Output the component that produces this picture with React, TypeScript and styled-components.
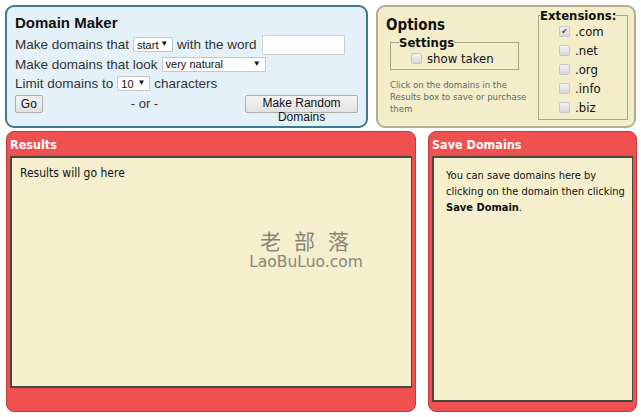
import styled, { createGlobalStyle } from "styled-components";

const GlobalStyle = createGlobalStyle`
  html, body {
    margin: 0;
    padding: 0;
    background: #ffffff;
  }
`;

const narrow = `"DejaVu Sans Condensed", "DejaVu Sans", Tahoma, sans-serif`;

// Página inteira
const Page = styled.div`
  padding: 5px;
  width: 631px;
  display: flex;
  flex-direction: column;
  gap: 4px;
`;

const TopRow = styled.div`
  display: grid;
  grid-template-columns: 363px 260px;
  gap: 8px;
  height: 122px;
`;

const BottomRow = styled.div`
  display: grid;
  grid-template-columns: 410px 209px;
  gap: 12px;
  height: 281px;
  padding-left: 1px;
`;

// Painel "Domain Maker"
const MakerPanel = styled.div`
  box-sizing: border-box;
  background: #e4f1f8;
  border: 2px solid #3d7b8c;
  border-radius: 9px;
  padding: 5px 8px 0 8px;
  font-family: "Liberation Sans", Arial, sans-serif;
  color: #333;
`;

const MakerTitle = styled.div`
  font-weight: bold;
  font-size: 15px;
  color: #111;
  height: 21px;
  line-height: 21px;
  margin-bottom: 2px;
`;

const Line = styled.div`
  display: flex;
  align-items: center;
  gap: 4px;
  font-size: 13.5px;
  height: 19.5px;
  white-space: nowrap;
`;

const FakeSelect = styled.span<{ $w: number }>`
  position: relative;
  display: inline-flex;
  align-items: center;
  box-sizing: border-box;
  width: ${p => p.$w}px;
  height: 15px;
  padding-left: 3px;
  background: #fff;
  border: 1px solid #c8c8c8;
  font-size: 11px;
  color: #111;
`;

const Arrow = styled.span`
  position: absolute;
  right: 4px;
  top: 1px;
  font-size: 8px;
  color: #111;
`;

const TextBox = styled.input`
  box-sizing: border-box;
  width: 83px;
  height: 20px;
  border: 1px solid #cfcfcf;
  background: #fff;
  margin-left: 1px;
  outline: none;
`;

const ButtonRow = styled.div`
  display: flex;
  align-items: flex-start;
  margin-top: 1px;
  white-space: nowrap;
`;

const GrayButton = styled.button<{ $w: number }>`
  box-sizing: border-box;
  width: ${p => p.$w}px;
  height: 18px;
  padding: 0;
  background: linear-gradient(#f4f4f4, #e2e2e2);
  border: 1px solid #adadad;
  border-radius: 2px;
  font-family: "Liberation Sans", Arial, sans-serif;
  font-size: 12px;
  line-height: 14px;
  color: #111;
  white-space: normal;
  overflow: visible;
  vertical-align: top;
`;

const Or = styled.span`
  margin-left: 88px;
  margin-right: 87px;
  margin-top: 1px;
  font-size: 13px;
  line-height: 16px;
`;

// Painel "Options"
const OptionsPanel = styled.div`
  box-sizing: border-box;
  background: #f3edca;
  border: 2px solid #b5ae8c;
  border-radius: 9px;
  padding: 4px 6px 6px 8px;
  display: flex;
  justify-content: space-between;
  font-family: ${narrow};
`;

const OptionsLeft = styled.div`
  display: flex;
  flex-direction: column;
`;

const OptionsTitle = styled.div`
  font-weight: bold;
  font-size: 15px;
  line-height: 18px;
  color: #111;
  margin-top: 5px;
`;

const Fieldset = styled.fieldset`
  margin: 0;
  border: 1px solid #a9a38a;
  padding: 0;
  min-width: 0;
  box-sizing: border-box;
`;

const Legend = styled.legend`
  font-weight: bold;
  font-size: 13px;
  padding: 0;
  color: #111;
  line-height: 13px;
`;

const SettingsBox = styled(Fieldset)`
  width: 129px;
  height: 34px;
  margin-left: 4px;
  margin-top: 2px;
  padding-left: 20px;
  & > legend {
    margin-left: -12px;
  }
`;

const Check = styled.label`
  display: flex;
  align-items: center;
  gap: 5px;
  font-size: 13px;
  color: #111;
  height: 19px;
`;

const Box = styled.span`
  width: 9px;
  height: 9px;
  border: 1px solid #c6c6c6;
  border-radius: 2px;
  background: linear-gradient(#f2f2f2, #d8d8d8);
  display: inline-flex;
  align-items: center;
  justify-content: center;
  font-size: 8px;
  line-height: 9px;
  color: #333;
`;

const Hint = styled.div`
  margin-top: 9px;
  margin-left: 4px;
  width: 142px;
  font-size: 9.5px;
  line-height: 12px;
  color: #666;
`;

const ExtBox = styled(Fieldset)`
  width: 90px;
  height: 111px;
  margin-top: -2px;
  padding-left: 20px;
  padding-top: 0;
  & > legend {
    margin-left: -19px;
  }
`;

// Painéis vermelhos
const RedPanel = styled.div<{ $bottom: number }>`
  box-sizing: border-box;
  background: #ef5151;
  border: 1px solid #c03e3e;
  border-radius: 8px;
  padding: 0 3px ${p => p.$bottom}px 3px;
  display: flex;
  flex-direction: column;
  font-family: ${narrow};
`;

const RedTitle = styled.div`
  color: #fff;
  font-weight: bold;
  font-size: 12.5px;
  height: 24px;
  line-height: 26px;
`;

const Inner = styled.div<{ $pad: string; $size: number }>`
  position: relative;
  flex: 1;
  background: #f5efce;
  border: 2px solid #4a4740;
  border-right-width: 1px;
  padding: ${p => p.$pad};
  font-size: ${p => p.$size}px;
  line-height: 16px;
  color: #111;
`;

const Watermark = styled.div`
  position: absolute;
  left: 236px;
  top: 71px;
  width: 116px;
  text-align: center;
  color: #8a8578;
`;

const WmHan = styled.div`
  font-family: "Noto Sans CJK SC", serif;
  font-size: 21px;
  letter-spacing: 13px;
  line-height: 22px;
  margin-left: 10px;
`;

const WmLatin = styled.div`
  font-family: "DejaVu Sans", sans-serif;
  font-size: 15.5px;
  line-height: 16px;
  margin-top: 3px;
`;

const exts = [".com", ".net", ".org", ".info", ".biz"];

function App() {
  return (
    <>
      <GlobalStyle />
      <Page>
        <TopRow>
          <MakerPanel>
            <MakerTitle>Domain Maker</MakerTitle>
            <Line>
              Make domains that
              <FakeSelect $w={40}>start<Arrow>▼</Arrow></FakeSelect>
              with the word
              <TextBox />
            </Line>
            <Line>
              Make domains that look
              <FakeSelect $w={104}>very natural<Arrow>▼</Arrow></FakeSelect>
            </Line>
            <Line>
              Limit domains to
              <FakeSelect $w={33}>10<Arrow>▼</Arrow></FakeSelect>
              characters
            </Line>
            <ButtonRow>
              <GrayButton $w={28}>Go</GrayButton>
              <Or>- or -</Or>
              <GrayButton $w={114}>Make Random Domains</GrayButton>
            </ButtonRow>
          </MakerPanel>

          <OptionsPanel>
            <OptionsLeft>
              <OptionsTitle>Options</OptionsTitle>
              <SettingsBox>
                <Legend>Settings</Legend>
                <Check><Box />show taken</Check>
              </SettingsBox>
              <Hint>Click on the domains in the Results box to save or purchase them</Hint>
            </OptionsLeft>
            <ExtBox>
              <Legend>Extensions:</Legend>
              {exts.map((e, i) => (
                <Check key={e}>
                  <Box>{i === 0 ? "✔" : ""}</Box>
                  {e}
                </Check>
              ))}
            </ExtBox>
          </OptionsPanel>
        </TopRow>

        <BottomRow>
          <RedPanel $bottom={23}>
            <RedTitle>Results</RedTitle>
            <Inner $pad="7px 8px" $size={12}>
              Results will go here
              <Watermark>
                <WmHan>老部落</WmHan>
                <WmLatin>LaoBuLuo.com</WmLatin>
              </Watermark>
            </Inner>
          </RedPanel>
          <RedPanel $bottom={9}>
            <RedTitle>Save Domains</RedTitle>
            <Inner $pad="10px 4px 10px 12px" $size={11}>
              You can save domains here by clicking on the domain then clicking <b>Save Domain</b>.
            </Inner>
          </RedPanel>
        </BottomRow>
      </Page>
    </>
  );
}

export default App;
